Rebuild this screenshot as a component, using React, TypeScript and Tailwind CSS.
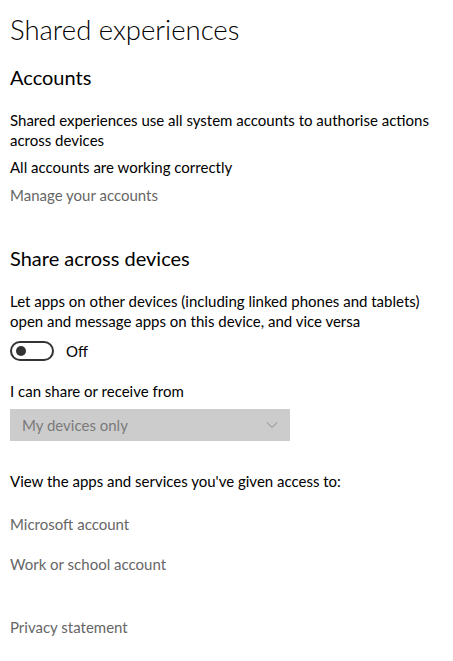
import React from 'react';

const font = "font-['Segoe_UI','Lato',sans-serif]";

const Toggle = () => (
  <div className="flex items-center gap-[12px] mt-[10px] h-[20px]">
    <div className="w-[44px] h-[20px] rounded-full border-2 border-[#333] flex items-center pl-[4px]">
      <div className="w-[10px] h-[10px] rounded-full bg-[#333]" />
    </div>
    <span className="text-[15px] leading-[20px] text-black">Off</span>
  </div>
);

const Dropdown = () => (
  <div className="mt-[8px] w-[280px] h-[32px] bg-[#cccccc] flex items-center justify-between pl-[12px] pr-[12px]">
    <span className="text-[15px] text-[#7a7a7a]">My devices only</span>
    <svg width="12" height="8" viewBox="0 0 12 8" fill="none">
      <path d="M1 1.5 L6 6.5 L11 1.5" stroke="#8a8a8a" strokeWidth="1" />
    </svg>
  </div>
);

export default function App() {
  return (
    <div className={`${font} bg-white min-h-screen pl-[10px] pr-[14px] pt-[12px] text-black`}>
      <h1 className="text-[27.5px] leading-[36px] font-light">Shared experiences</h1>

      <h2 className="mt-[15px] text-[20px] leading-[28px]">Accounts</h2>
      <p className="mt-[19px] text-[15px] leading-[20px]">
        Shared experiences use all system accounts to authorise actions across devices
      </p>
      <p className="mt-[7px] text-[15px] leading-[20px]">All accounts are working correctly</p>
      <p className="mt-[8px] text-[15px] leading-[20px] text-[#666]">Manage your accounts</p>

      <h2 className="mt-[39px] text-[20px] leading-[28px]">Share across devices</h2>
      <p className="mt-[19px] text-[15px] leading-[20px]">
        Let apps on other devices (including linked phones and tablets) open and message apps on this device, and vice versa
      </p>
      <Toggle />

      <p className="mt-[20px] text-[15px] leading-[20px]">I can share or receive from</p>
      <Dropdown />

      <p className="mt-[30px] text-[15px] leading-[20px]">View the apps and services you've given access to:</p>
      <p className="mt-[23px] text-[15px] leading-[20px] text-[#666]">Microsoft account</p>
      <p className="mt-[20px] text-[15px] leading-[20px] text-[#666]">Work or school account</p>

      <p className="mt-[43px] text-[15px] leading-[20px] text-[#666]">Privacy statement</p>
    </div>
  );
}
